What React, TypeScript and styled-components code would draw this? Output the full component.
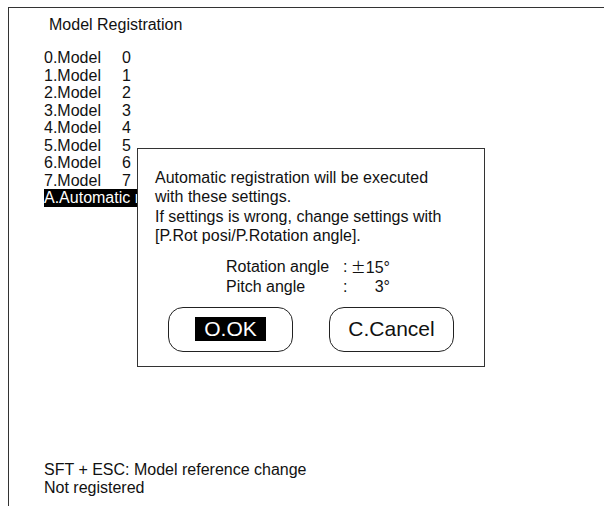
import React from "react";
import styled, { createGlobalStyle } from "styled-components";

const models = [0, 1, 2, 3, 4, 5, 6, 7];

const App = () => {
  return (
    <>
      <GlobalStyle />
      <Screen>
        <Title>Model Registration</Title>
        <ModelList>
          {models.map((n) => (
            <ModelRow key={n}>
              <ModelName>{n}.Model</ModelName>
              <span>{n}</span>
            </ModelRow>
          ))}
          <ModelRow>
            <Selected>A.Automatic registration</Selected>
          </ModelRow>
        </ModelList>

        <Footer>
          <div>SFT + ESC: Model reference change</div>
          <div>Not registered</div>
        </Footer>

        <Dialog>
          <Message>
            Automatic registration will be executed
            <br />
            with these settings.
            <br />
            If settings is wrong, change settings with
            <br />
            [P.Rot posi/P.Rotation angle].
          </Message>
          <Settings>
            <span>Rotation angle</span>
            <span>:</span>
            <Value>
              <PlusMinus>±</PlusMinus>15°
            </Value>
            <span>Pitch angle</span>
            <span>:</span>
            <Value>3°</Value>
          </Settings>
          <Buttons>
            <DialogButton>
              <ButtonLabel active>O.OK</ButtonLabel>
            </DialogButton>
            <DialogButton>
              <ButtonLabel>C.Cancel</ButtonLabel>
            </DialogButton>
          </Buttons>
        </Dialog>
      </Screen>
    </>
  );
};

const GlobalStyle = createGlobalStyle`
  html, body {
    margin: 0;
    padding: 0;
    background: #fff;
  }

  body {
    font-family: "Liberation Sans", Arial, sans-serif;
    font-size: 16px;
    color: #111;
  }
`;

const Screen = styled.div`
  position: relative;
  display: flex;
  flex-direction: column;
  box-sizing: border-box;
  height: 499px;
  margin: 7px 0 0 8px;
  padding: 8px 0 9px 35px;
  border-top: 1px solid #333;
  border-left: 1px solid #333;
`;

const Title = styled.div`
  margin-left: 5px;
  line-height: 18px;
`;

const ModelList = styled.div`
  margin-top: 15px;
  line-height: 17.5px;
`;

const ModelRow = styled.div`
  display: flex;
  white-space: nowrap;
`;

const ModelName = styled.span`
  width: 78px;
`;

/* the dialog sits over the rest of this row, so the bar is clipped at its edge */
const Selected = styled.span`
  display: inline-block;
  width: 93px;
  overflow: hidden;
  color: #fff;
  white-space: nowrap;
  background: #000;
`;

const Footer = styled.div`
  margin-top: auto;
  line-height: 18px;
`;

const Dialog = styled.div`
  position: absolute;
  top: 140px;
  left: 128px;
  display: flex;
  flex-direction: column;
  box-sizing: border-box;
  width: 348px;
  height: 219px;
  padding: 19px 0 0 17px;
  background: #fff;
  border: 1px solid #333;
`;

const Message = styled.div`
  line-height: 19.4px;
`;

const Settings = styled.div`
  display: grid;
  grid-template-columns: 117px 7px 40px;
  margin: 11px 0 0 71px;
  line-height: 19px;
`;

const Value = styled.span`
  text-align: right;
`;

const PlusMinus = styled.span`
  font-family: "Noto Sans CJK JP", sans-serif;
  font-size: 15px;
`;

const Buttons = styled.div`
  display: flex;
  gap: 36px;
  justify-content: center;
  margin: 11px 0 0 -17px;
`;

const DialogButton = styled.div`
  display: flex;
  align-items: center;
  justify-content: center;
  box-sizing: border-box;
  width: 125px;
  height: 45px;
  border: 1px solid #222;
  border-radius: 15px;
`;

const ButtonLabel = styled.span<{ active?: boolean }>`
  padding: 0 9px;
  font-size: 21px;
  line-height: 24px;
  color: ${(props) => (props.active ? "#fff" : "#111")};
  background: ${(props) => (props.active ? "#000" : "transparent")};
`;

export default App;
